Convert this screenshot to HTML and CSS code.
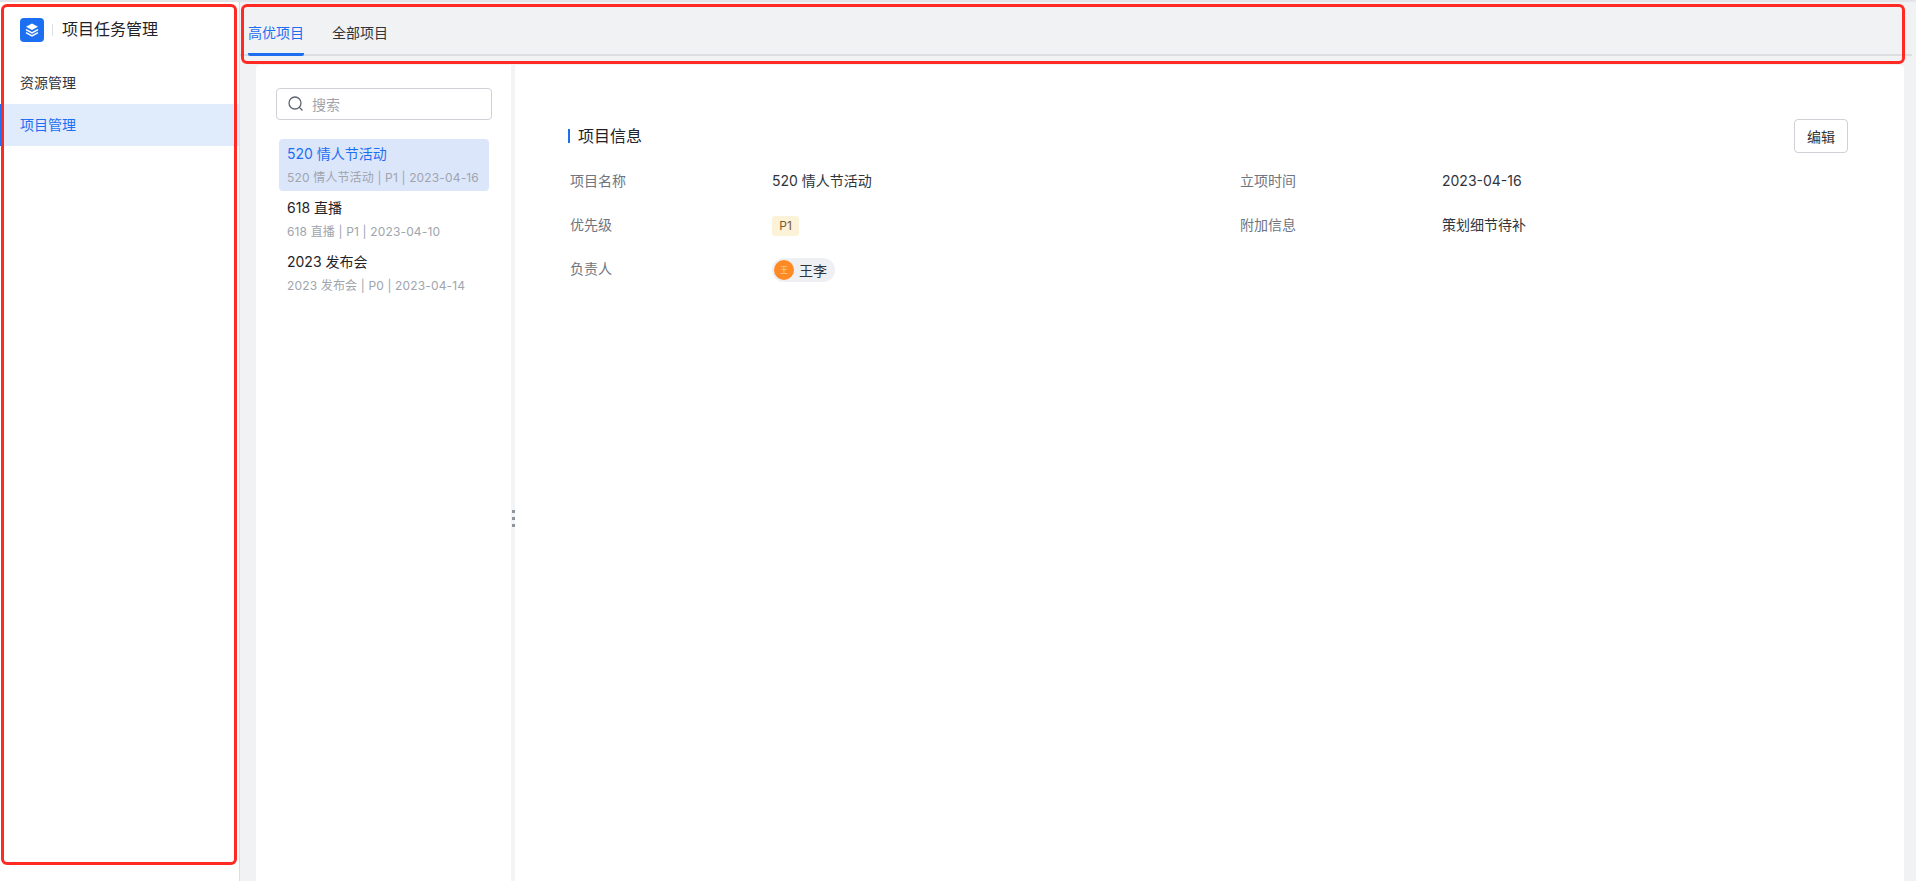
FILE: index.html
```html
<!DOCTYPE html>
<html lang="zh-CN">
<head>
    <meta charset="UTF-8">
    <title>项目任务管理</title>
    <link rel="stylesheet" href="styles.css">
</head>
<body>
    <div class="page">
        <aside class="sidebar">
            <div class="brand">
                <span class="brand-logo">
                    <svg viewBox="0 0 24 24" width="24" height="24">
                        <path d="M12 5.5l6 3.2-6 3.2-6-3.2z" fill="#fff"/>
                        <path d="M6 11.6l6 3.2 6-3.2" fill="none" stroke="#fff" stroke-width="1.5"/>
                        <path d="M6 14.6l6 3.2 6-3.2" fill="none" stroke="#fff" stroke-width="1.5"/>
                    </svg>
                </span>
                <span class="brand-sep"></span>
                <span class="brand-name">项目任务管理</span>
            </div>
            <nav class="menu">
                <div class="menu-item">资源管理</div>
                <div class="menu-item active">项目管理</div>
            </nav>
        </aside>

        <main class="main">
            <div class="tabs">
                <div class="tab active">高优项目</div>
                <div class="tab">全部项目</div>
            </div>

            <div class="content">
                <section class="list-panel">
                    <div class="search">
                        <svg viewBox="0 0 16 16" width="16" height="16">
                            <circle cx="7" cy="7" r="6" fill="none" stroke="#5f6672" stroke-width="1.3"/>
                            <path d="M11.4 11.4l3.1 3.1" fill="none" stroke="#5f6672" stroke-width="1.3"/>
                        </svg>
                        <span class="search-text">搜索</span>
                    </div>
                    <div class="project active">
                        <div class="project-title">520 情人节活动</div>
                        <div class="project-sub">520 情人节活动 | P1 | 2023-04-16</div>
                    </div>
                    <div class="project">
                        <div class="project-title">618 直播</div>
                        <div class="project-sub">618 直播 | P1 | 2023-04-10</div>
                    </div>
                    <div class="project">
                        <div class="project-title">2023 发布会</div>
                        <div class="project-sub">2023 发布会 | P0 | 2023-04-14</div>
                    </div>
                </section>

                <div class="gutter">
                    <span class="dot"></span>
                    <span class="dot"></span>
                    <span class="dot"></span>
                </div>

                <section class="detail">
                    <div class="detail-head">
                        <h2 class="detail-title">项目信息</h2>
                        <button class="edit-btn">编辑</button>
                    </div>
                    <div class="info-grid">
                        <div class="info-label">项目名称</div>
                        <div class="info-value">520 情人节活动</div>
                        <div class="info-label">立项时间</div>
                        <div class="info-value">2023-04-16</div>

                        <div class="info-label">优先级</div>
                        <div class="info-value"><span class="tag">P1</span></div>
                        <div class="info-label">附加信息</div>
                        <div class="info-value">策划细节待补</div>

                        <div class="info-label">负责人</div>
                        <div class="info-value">
                            <span class="user">
                                <span class="avatar">王</span>
                                <span>王李</span>
                            </span>
                        </div>
                    </div>
                </section>
            </div>
        </main>
    </div>

    <!-- red annotation boxes -->
    <div class="mark mark-side"></div>
    <div class="mark mark-tabs"></div>
</body>
</html>
```

FILE: styles.css
```css
html, body {
    margin: 0;
    padding: 0;
    width: 100%;
    height: 100%;
    overflow: hidden;
    background: #f1f2f4;
    font-family: Inter, "Noto Sans CJK SC", sans-serif;
    font-size: 14px;
    color: #1f2329;
}

.page {
    display: flex;
    height: 100%;
    border-top: 2px solid #e4e5e8;
    box-sizing: border-box;
}

/* Sidebar */
.sidebar {
    width: 240px;
    flex: none;
    background: #fff;
    border-right: 1px solid #dcdee2;
    box-sizing: border-box;
}

.brand {
    display: flex;
    align-items: center;
    height: 52px;
    padding: 4px 0 0 20px;
    margin-bottom: 8px;
    box-sizing: border-box;
}

.brand-logo {
    display: flex;
    width: 24px;
    height: 24px;
    background: #1d6ff2;
    border-radius: 4px;
}

.brand-sep {
    width: 1px;
    height: 12px;
    margin: 0 9px 0 8px;
    background: #dcdee2;
}

.brand-name {
    font-size: 16px;
    line-height: 24px;
    padding-bottom: 2px;
}

.menu-item {
    height: 42px;
    line-height: 42px;
    padding-left: 20px;
    color: #30343b;
}

.menu-item.active {
    background: #e0ebfc;
    color: #1d6ff2;
    box-shadow: inset 3px 0 0 #1d6ff2;
}

/* Tabs */
.main {
    flex: 1;
    min-width: 0;
    display: flex;
    flex-direction: column;
}

.tabs {
    display: flex;
    gap: 28px;
    height: 54px;
    margin-right: 4px;
    padding-left: 8px;
    border-bottom: 2px solid #dcdee2;
    box-sizing: border-box;
}

.tab {
    height: 54px;
    line-height: 62px;
    box-sizing: border-box;
    color: #30343b;
}

.tab.active {
    color: #1d6ff2;
    border-bottom: 3px solid #1d6ff2;
    border-radius: 2px;
}

.content {
    flex: 1;
    display: flex;
    min-height: 0;
    margin: 9px 12px 0 16px;
}

/* Project list */
.list-panel {
    width: 255px;
    flex: none;
    padding: 23px 19px 0 20px;
    box-sizing: border-box;
    background: #fff;
    border-radius: 4px 0 0 0;
}

.search {
    display: flex;
    align-items: center;
    gap: 8px;
    height: 32px;
    padding-left: 11px;
    margin-bottom: 19px;
    border: 1px solid #ced1d6;
    border-radius: 4px;
    box-sizing: border-box;
}

.search-text {
    color: #a0a5ad;
}

.project {
    height: 52px;
    margin: 0 3px 2px;
    padding: 4px 8px 0;
    box-sizing: border-box;
    border-radius: 4px;
}

.project.active {
    background: #dce6fb;
}

.project.active .project-title {
    color: #1d6ff2;
}

.project-title {
    line-height: 22px;
    white-space: nowrap;
}

.project-sub {
    margin-top: 4px;
    font-size: 12px;
    line-height: 18px;
    letter-spacing: 0.15px;
    color: #a0a5ad;
    white-space: nowrap;
}

/* Drag handle sits a bit below the middle of the column */
.gutter {
    width: 4px;
    flex: none;
    display: flex;
    flex-direction: column;
    justify-content: center;
    align-items: center;
    gap: 4px;
    padding-top: 90px;
    box-sizing: border-box;
    background: #f3f4f6;
}

.dot {
    width: 3px;
    height: 3px;
    background: #8f949c;
}

/* Detail */
.detail {
    flex: 1;
    min-width: 0;
    padding: 54px 56px 0 53px;
    background: #fff;
    border-radius: 0 4px 0 0;
}

.detail-head {
    display: flex;
    justify-content: space-between;
    align-items: center;
    height: 34px;
    margin-bottom: 5px;
}

.detail-title {
    margin: 0;
    padding-left: 8px;
    font-size: 16px;
    font-weight: 400;
    line-height: 14px;
    border-left: 2px solid #1d6ff2;
}

.edit-btn {
    width: 54px;
    height: 34px;
    padding: 0;
    background: #fff;
    border: 1px solid #ced1d6;
    border-radius: 4px;
    font: inherit;
    color: #30343b;
}

.info-grid {
    display: grid;
    grid-template-columns: 202px 468px 202px 1fr;
    grid-auto-rows: 44px;
    align-items: center;
    padding-left: 2px;
}

.info-label {
    color: #6f7580;
}

.info-value {
    display: flex;
    align-items: center;
    color: #30343b;
}

.tag {
    width: 27px;
    height: 20px;
    margin-top: 4px;
    line-height: 20px;
    text-align: center;
    font-size: 12px;
    background: #fbf2d8;
    color: #7a5a2c;
    border-radius: 3px;
}

.user {
    display: flex;
    align-items: center;
    gap: 5px;
    height: 24px;
    margin-top: 4px;
    padding: 0 8px 0 2px;
    background: #eff0f3;
    border-radius: 12px;
}

.avatar {
    width: 20px;
    height: 20px;
    line-height: 20px;
    text-align: center;
    font-size: 8px;
    color: #fcd9b5;
    background: #ff8a24;
    border-radius: 50%;
}

/* Annotation overlays */
.mark {
    position: absolute;
    border: 3px solid #ff2a24;
    border-radius: 6px;
    box-sizing: border-box;
}

.mark-side {
    left: 1px;
    top: 4px;
    width: 236px;
    height: 861px;
}

.mark-tabs {
    left: 241px;
    top: 4px;
    width: 1664px;
    height: 60px;
}
```
